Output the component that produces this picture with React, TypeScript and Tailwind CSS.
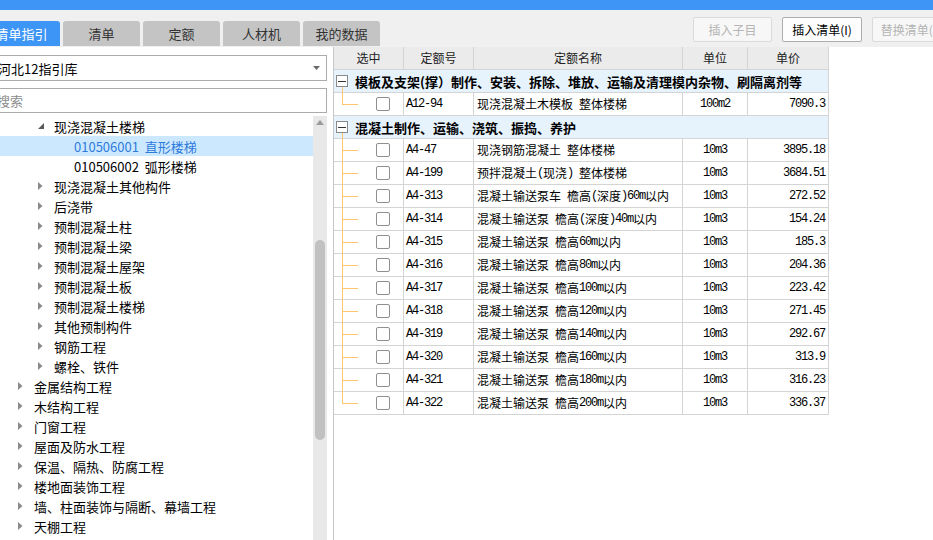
import React from 'react';

const CJK = "font-['Noto_Sans_CJK_SC',sans-serif]";

type Node = { lv: 1 | 2 | 3; t: string; open?: boolean; sel?: boolean };

const tree: Node[] = [
  { lv: 2, t: '现浇混凝土楼梯', open: true },
  { lv: 3, t: '010506001  直形楼梯', sel: true },
  { lv: 3, t: '010506002  弧形楼梯' },
  { lv: 2, t: '现浇混凝土其他构件' },
  { lv: 2, t: '后浇带' },
  { lv: 2, t: '预制混凝土柱' },
  { lv: 2, t: '预制混凝土梁' },
  { lv: 2, t: '预制混凝土屋架' },
  { lv: 2, t: '预制混凝土板' },
  { lv: 2, t: '预制混凝土楼梯' },
  { lv: 2, t: '其他预制构件' },
  { lv: 2, t: '钢筋工程' },
  { lv: 2, t: '螺栓、铁件' },
  { lv: 1, t: '金属结构工程' },
  { lv: 1, t: '木结构工程' },
  { lv: 1, t: '门窗工程' },
  { lv: 1, t: '屋面及防水工程' },
  { lv: 1, t: '保温、隔热、防腐工程' },
  { lv: 1, t: '楼地面装饰工程' },
  { lv: 1, t: '墙、柱面装饰与隔断、幕墙工程' },
  { lv: 1, t: '天棚工程' },
  { lv: 1, t: '油漆、涂料、裱糊工程' },
];

const pad: Record<number, string> = { 1: 'pl-[18px]', 2: 'pl-[38px]', 3: 'pl-[74px]' };

type Row = [string, string, string, string];

const groups: { title: string; rows: Row[] }[] = [
  {
    title: '模板及支架(撑）制作、安装、拆除、堆放、运输及清理模内杂物、刷隔离剂等',
    rows: [['A12-94', '现浇混凝土木模板 整体楼梯', '100m2', '7090.3']],
  },
  {
    title: '混凝土制作、运输、浇筑、振捣、养护',
    rows: [
      ['A4-47', '现浇钢筋混凝土 整体楼梯', '10m3', '3895.18'],
      ['A4-199', '预拌混凝土(现浇) 整体楼梯', '10m3', '3684.51'],
      ['A4-313', '混凝土输送泵车 檐高(深度)60m以内', '10m3', '272.52'],
      ['A4-314', '混凝土输送泵 檐高(深度)40m以内', '10m3', '154.24'],
      ['A4-315', '混凝土输送泵 檐高60m以内', '10m3', '185.3'],
      ['A4-316', '混凝土输送泵 檐高80m以内', '10m3', '204.36'],
      ['A4-317', '混凝土输送泵 檐高100m以内', '10m3', '223.42'],
      ['A4-318', '混凝土输送泵 檐高120m以内', '10m3', '271.45'],
      ['A4-319', '混凝土输送泵 檐高140m以内', '10m3', '292.67'],
      ['A4-320', '混凝土输送泵 檐高160m以内', '10m3', '313.9'],
      ['A4-321', '混凝土输送泵 檐高180m以内', '10m3', '316.23'],
      ['A4-322', '混凝土输送泵 檐高200m以内', '10m3', '336.37'],
    ],
  },
];

// half-width runs look like SimSun: 6px per char
function Sim({ s }: { s: string }) {
  const parts = s.split(/([\x00-\x7f]+)/).filter(Boolean);
  return (
    <>
      {parts.map((p, i) =>
        /^[\x00-\x7f]+$/.test(p) ? (
          <span key={i} className="font-['Liberation_Mono',monospace] tracking-[-1.2px] whitespace-pre">
            {p}
          </span>
        ) : (
          <span key={i}>{p}</span>
        )
      )}
    </>
  );
}

const cols = 'grid grid-cols-[70px_70px_209px_65px_81px]';
const cell = 'border-r border-b border-[#d4d4d4] h-[23px] flex items-center';

function Arrow({ open }: { open?: boolean }) {
  if (open)
    return (
      <svg width="6" height="6" viewBox="0 0 6 6" className="mt-[-1px]">
        <path d="M6 0 L6 6 L0 6 Z" fill="#5a5a5a" />
      </svg>
    );
  return (
    <svg width="5" height="8" viewBox="0 0 5 8">
      <path d="M0 0 L4.5 4 L0 8 Z" fill="#8a8a8a" />
    </svg>
  );
}

function LeftPanel() {
  return (
    <div className="w-[334px] shrink-0 h-full border-r border-[#c8c8c8] bg-white flex flex-col overflow-hidden">
      <div className="mt-[8px] -ml-[10px] mr-[6px] h-[26px] border border-[#ababab] bg-white flex items-center pl-[7px] pr-[6px]">
        <span className={`${CJK} text-[13px] text-black flex-1 leading-none`}>河北12指引库</span>
        <svg width="7" height="4" viewBox="0 0 7 4">
          <path d="M0 0 L7 0 L3.5 4 Z" fill="#6b6b6b" />
        </svg>
      </div>
      <div className="mt-[7px] -ml-[10px] mr-[6px] h-[25px] border border-[#ababab] bg-white flex items-center pl-[6px]">
        <span className={`${CJK} text-[13px] text-[#8c8c8c] leading-none`}>搜索</span>
      </div>
      <div className="mt-[3px] flex flex-1 min-h-0">
        <div className="w-[313px] flex flex-col">
          {tree.map((n, i) => (
            <div
              key={i}
              className={`h-[20px] shrink-0 flex items-center ${pad[n.lv]} ${n.sel ? 'bg-[#cce8ff]' : ''}`}
            >
              {n.lv < 3 && (
                <span className="w-[16px] flex items-center">
                  <Arrow open={n.open} />
                </span>
              )}
              <span
                className={`${CJK} text-[13px] leading-none whitespace-pre ${n.sel ? 'text-[#2f7bdc]' : 'text-black'}`}
              >
                {n.t}
              </span>
            </div>
          ))}
        </div>
        <div className="w-[14px] bg-[#e8e8e8] flex flex-col items-center">
          <svg width="8" height="5" viewBox="0 0 8 5" className="mt-[4px]">
            <path d="M0 5 L4 0 L8 5 Z" fill="#9a9a9a" />
          </svg>
          <div className="mt-[115px] w-[10px] h-[200px] rounded-full bg-[#c1c1c1]" />
        </div>
      </div>
    </div>
  );
}

function Table() {
  return (
    <div className="w-[495px] shrink-0">
      <div className={`${cols} bg-[#ebebeb] ${CJK} text-[12px] text-[#222]`}>
        {['选中', '定额号', '定额名称', '单位', '单价'].map((h) => (
          <div key={h} className={`${cell} justify-center leading-none`}>
            {h}
          </div>
        ))}
      </div>
      {groups.map((g, gi) => (
        <div key={gi}>
          <div className="h-[23px] bg-[#e6f3fd] border-r border-b border-[#d4d4d4] flex items-center relative">
            <span className="ml-[2px] w-[12px] h-[12px] border border-[#8a8a8a] bg-white flex items-center justify-center">
              <span className="w-[8px] h-[1px] bg-[#333]" />
            </span>
            <span className="absolute left-[8px] top-[17px] -bottom-[1px] w-[1px] bg-[#fcc56e]" />
            <span className={`${CJK} ml-[7px] text-[13px] font-bold text-black leading-none whitespace-pre`}>
              {g.title}
            </span>
          </div>
          {g.rows.map((r, ri) => {
            const last = ri === g.rows.length - 1;
            return (
              <div key={ri} className={`${cols} ${CJK} text-[12px] text-black`}>
                <div className={`${cell} relative`}>
                  <span
                    className={`absolute left-[8px] -top-[1px] w-[1px] bg-[#fcc56e] ${last ? 'h-[12px]' : '-bottom-[1px]'}`}
                  />
                  <span className="absolute left-[8px] top-[11px] w-[16px] h-[1px] bg-[#fcc56e]" />
                  <span className="ml-[42px] w-[14px] h-[14px] rounded-[2px] border border-[#8f8f8f] bg-white" />
                </div>
                <div className={`${cell} pl-[2px] leading-none`}>
                  <Sim s={r[0]} />
                </div>
                <div className={`${cell} pl-[3px] leading-none whitespace-pre`}>
                  <Sim s={r[1]} />
                </div>
                <div className={`${cell} justify-center leading-none`}>
                  <Sim s={r[2]} />
                </div>
                <div className={`${cell} justify-end pr-[3px] leading-none`}>
                  <Sim s={r[3]} />
                </div>
              </div>
            );
          })}
        </div>
      ))}
    </div>
  );
}

export default function App() {
  const tabs = ['清单', '定额', '人材机', '我的数据'];
  return (
    <div className="w-[933px] h-[540px] overflow-hidden bg-white flex flex-col">
      <div className="h-[10px] bg-[#3f95f5] shrink-0" />
      <div className="h-[37px] bg-[#f0f0f0] shrink-0 flex">
        <div className="w-[420px] shrink-0 flex items-end gap-[3px] -ml-[17px] pb-[1px]">
          <div className={`w-[77px] shrink-0 h-[25px] rounded-t-[3px] bg-[#3d95f5] text-white ${CJK} text-[13px] flex items-center justify-center`}>
            清单指引
          </div>
          {tabs.map((t) => (
            <div
              key={t}
              className={`w-[77px] shrink-0 h-[25px] rounded-t-[3px] bg-[#c4c4c4] text-[#333] ${CJK} text-[13px] flex items-center justify-center`}
            >
              {t}
            </div>
          ))}
        </div>
        <div className="flex-1 flex justify-end items-start pt-[7px] gap-[10px] -mr-[20px]">
          <div className={`w-[79px] shrink-0 h-[25px] border border-[#dadada] rounded-[2px] bg-[#f7f7f7] text-[#b4b4b4] ${CJK} text-[12px] flex items-center justify-center`}>
            插入子目
          </div>
          <div className={`w-[80px] shrink-0 h-[25px] border border-[#adadad] rounded-[2px] bg-[#fdfdfd] text-black ${CJK} text-[12px] flex items-center justify-center`}>
            插入清单(I)
          </div>
          <div className={`w-[81px] shrink-0 h-[25px] border border-[#dadada] rounded-[2px] bg-[#f7f7f7] text-[#b4b4b4] ${CJK} text-[12px] flex items-center justify-center`}>
            替换清单(R)
          </div>
        </div>
      </div>
      <div className="flex flex-1 min-h-0">
        <LeftPanel />
        <Table />
        <div className="flex-1" />
      </div>
    </div>
  );
}
